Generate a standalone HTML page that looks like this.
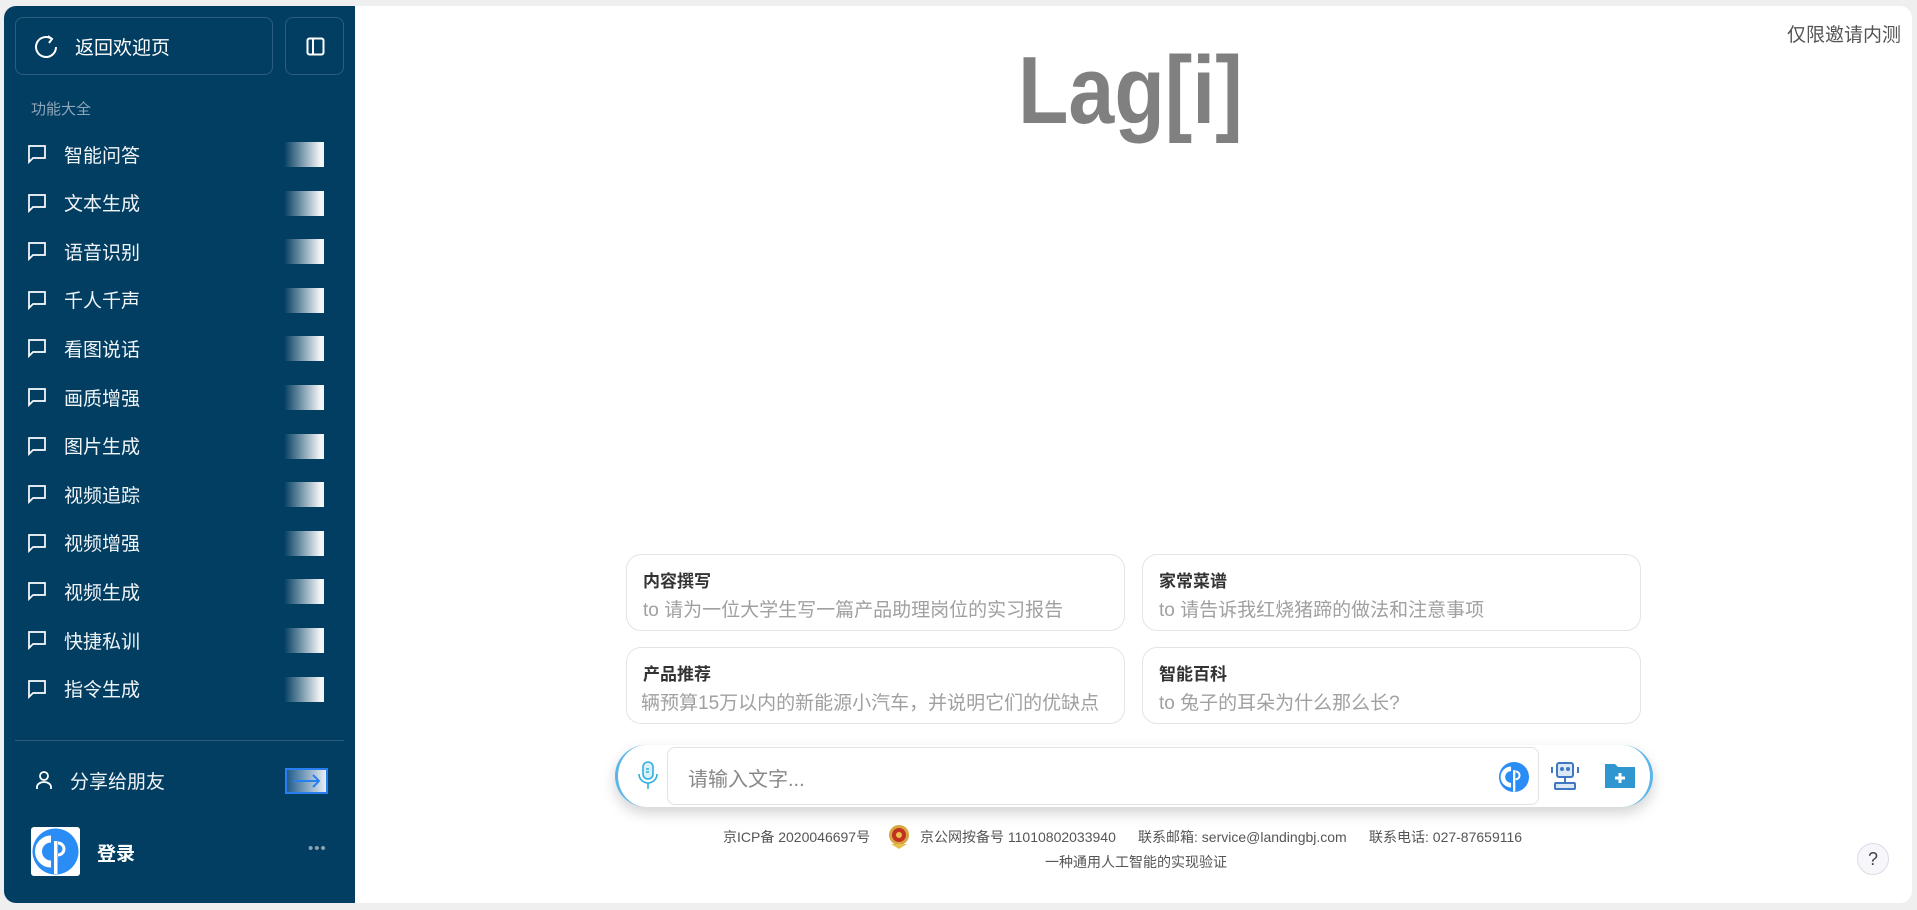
<!DOCTYPE html>
<html><head><meta charset="utf-8"><style>
*{box-sizing:border-box;margin:0;padding:0}
body{width:1917px;height:910px;background:#efefef;font-family:"Liberation Sans","Noto Sans CJK SC",sans-serif;position:relative;overflow:hidden}
.side{position:absolute;left:4px;top:6px;width:351px;height:897px;background:#023e62;border-radius:12px 0 0 12px;color:#fff}
.main{position:absolute;left:355px;top:6px;width:1557px;height:897px;background:#fff;border-radius:0 12px 12px 0}
.btn{position:absolute;border:1px solid #2d5d7e;border-radius:8px}
.item{position:absolute;left:23px;width:300px;height:30px;display:flex;align-items:center;font-size:19px;color:#f2f5f8}
.item svg{margin-right:17px}
.grad{position:absolute;left:280px;top:3px;width:40px;height:25px;background:linear-gradient(90deg,#023e62,#f2f4f6 90%)}
.card{position:absolute;width:499px;height:77px;border:1px solid #e4e4e4;border-radius:15px;padding:0 0 0 16px}
.card b{display:block;font-size:17px;color:#333;margin-top:12px}
.card span{display:block;font-size:19px;color:#a0a0a0;margin-top:3px;white-space:nowrap;overflow:hidden}
.foot{position:absolute;font-size:14px;color:#555;white-space:nowrap}
</style></head><body>
<div class="side">
  <div class="btn" style="left:11px;top:11px;width:258px;height:58px">
    <svg style="position:absolute;left:17px;top:16px" width="26" height="26" viewBox="0 0 26 26" fill="none" stroke="#fff" stroke-width="2"><path d="M19 5A10 10 0 1 0 23 13"/><path d="M15 2l4 3-3 4"/></svg>
    <span style="position:absolute;left:59px;top:15px;font-size:19px">返回欢迎页</span>
  </div>
  <div class="btn" style="left:281px;top:11px;width:59px;height:58px">
    <svg style="position:absolute;left:20px;top:19px" width="19" height="19" viewBox="0 0 19 19" fill="none" stroke="#fff" stroke-width="2"><rect x="1.5" y="1.5" width="16" height="16" rx="2"/><path d="M7 2v15"/></svg>
  </div>
  <div style="position:absolute;left:27px;top:92px;font-size:15px;color:#8fa6b8">功能大全</div>
  <div id="items"></div>
  <div style="position:absolute;left:11px;top:734px;width:329px;height:1px;background:#2f5c7c"></div>
  <div class="item" style="top:759px;left:31px">
    <svg width="18" height="20" viewBox="0 0 18 20" fill="none" stroke="#fff" stroke-width="1.8"><circle cx="9" cy="6" r="4"/><path d="M2 19v-2a7 5 0 0 1 14 0v2"/></svg>
    <span>分享给朋友</span>
  </div>
  <div style="position:absolute;left:281px;top:762px;width:43px;height:26px;border:2px solid #2a7ff0;background:linear-gradient(90deg,#1f5c8a,#e8eef6)">
    <svg style="position:absolute;left:6px;top:4px" width="30" height="14" viewBox="0 0 30 14" fill="none" stroke="#2a7ff0" stroke-width="2"><path d="M0 7h26M20 1l6 6-6 6"/></svg>
  </div>
  <div style="position:absolute;left:27px;top:821px;width:49px;height:49px;background:#fff;border-radius:3px">
    <svg width="49" height="49" viewBox="0 0 49 49"><circle cx="24.5" cy="24.5" r="23" fill="#2a8cf5"/><path d="M20 12a12 12 0 0 0 0 25" fill="none" stroke="#fff" stroke-width="7"/><rect x="23" y="14" width="3.5" height="33" fill="#fff"/><path d="M27 16a6 6 0 0 1 0 12" fill="none" stroke="#fff" stroke-width="3"/></svg>
  </div>
  <div style="position:absolute;left:93px;top:833px;font-size:19px;font-weight:bold">登录</div>
  <div style="position:absolute;left:304px;top:834px;font-size:15px;color:#8fa0b0;letter-spacing:1px">•••</div>
</div>
<div class="main">
  <div style="position:absolute;right:11px;top:14px;font-size:19px;color:#555">仅限邀请内测</div>
  <div style="position:absolute;left:663px;top:30px;font-size:96px;font-weight:bold;color:#808080;transform:scaleX(0.86);transform-origin:left top;width:262px;text-align:left">Lag[i]</div>
  <div class="card" style="left:271px;top:548px"><b>内容撰写</b><span>to 请为一位大学生写一篇产品助理岗位的实习报告</span></div>
  <div class="card" style="left:787px;top:548px"><b>家常菜谱</b><span>to 请告诉我红烧猪蹄的做法和注意事项</span></div>
  <div class="card" style="left:271px;top:641px;padding-left:14px"><b style="margin-left:2px">产品推荐</b><span>辆预算15万以内的新能源小汽车，并说明它们的优缺点</span></div>
  <div class="card" style="left:787px;top:641px"><b>智能百科</b><span>to 兔子的耳朵为什么那么长?</span></div>
  <div style="position:absolute;left:260px;top:739px;width:1038px;height:62px;background:#fff;border-radius:31px;box-shadow:0 6px 14px rgba(0,0,0,.18);border-left:3px solid #5ab6ea;border-right:3px solid #5ab6ea">
    <svg style="position:absolute;left:19px;top:16px" width="22" height="30" viewBox="0 0 22 30" fill="none" stroke="#33b0e0" stroke-width="1.6"><rect x="6" y="1" width="10" height="17" rx="5" fill="#d8f1fb"/><path d="M2 13a9 9 0 0 0 18 0M11 22v6"/><path d="M9 8h3M9 11h3"/></svg>
    <div style="position:absolute;left:49px;top:2px;width:872px;height:58px;border:1px solid #e2e2e2;border-radius:8px">
      <span style="position:absolute;left:20px;top:15px;font-size:20px;color:#888">请输入文字...</span>
      <svg style="position:absolute;left:830px;top:13px" width="32" height="32" viewBox="0 0 49 49"><circle cx="24.5" cy="24.5" r="23" fill="#2a8cf5"/><path d="M20 12a12 12 0 0 0 0 25" fill="none" stroke="#fff" stroke-width="7"/><rect x="23" y="14" width="3.5" height="33" fill="#fff"/><path d="M27 16a6 6 0 0 1 0 12" fill="none" stroke="#fff" stroke-width="3"/></svg>
    </div>
    <svg style="position:absolute;left:930px;top:14px" width="34" height="34" viewBox="0 0 34 34" fill="none" stroke="#3f78c0" stroke-width="2"><rect x="9" y="4" width="16" height="14" rx="2" fill="#dde8f7"/><path d="M17 18v6"/><rect x="7" y="24" width="20" height="6" rx="1" fill="#dde8f7"/><path d="M4 8v6M30 8v6"/><circle cx="14" cy="10" r="1" fill="#3f78c0"/><circle cx="20" cy="10" r="1" fill="#3f78c0"/></svg>
    <svg style="position:absolute;left:986px;top:16px" width="32" height="28" viewBox="0 0 32 28"><path d="M1 3h10l3 3h17v21H1z" fill="#2f96cf"/><path d="M16 12v10M11 17h10" stroke="#fff" stroke-width="3"/></svg>
  </div>
  <div class="foot" style="left:368px;top:821px">京ICP备 2020046697号</div>
  <svg style="position:absolute;left:533px;top:818px" width="22" height="26" viewBox="0 0 22 26"><circle cx="11" cy="11" r="10" fill="#d8a640"/><circle cx="11" cy="11" r="7" fill="#c23020"/><circle cx="11" cy="11" r="3" fill="#e8c050"/><path d="M3 20l8 5 8-5" fill="#e8c050"/></svg>
  <div class="foot" style="left:565px;top:821px">京公网按备号 11010802033940</div>
  <div class="foot" style="left:783px;top:821px">联系邮箱: service@landingbj.com</div>
  <div class="foot" style="left:1014px;top:821px">联系电话: 027-87659116</div>
  <div class="foot" style="left:690px;top:846px">一种通用人工智能的实现验证</div>
  <div style="position:absolute;left:1502px;top:837px;width:32px;height:32px;border:1px solid #dcdce6;border-radius:50%;background:#f7f7fb;text-align:center;line-height:30px;font-size:18px;color:#444">?</div>
</div>
<script>
var n=["智能问答","文本生成","语音识别","千人千声","看图说话","画质增强","图片生成","视频追踪","视频增强","视频生成","快捷私训","指令生成"],h="";
for(var i=0;i<n.length;i++){h+='<div class="item" style="top:'+(133+i*48.6)+'px"><svg width="20" height="20" viewBox="0 0 20 20" fill="none" stroke="#fff" stroke-width="1.7"><path d="M2 2h16v12H6l-4 4z"/></svg><span>'+n[i]+'</span><div class="grad" style="left:257px"></div></div>';}
document.getElementById("items").innerHTML=h;
</script>
</body></html>
